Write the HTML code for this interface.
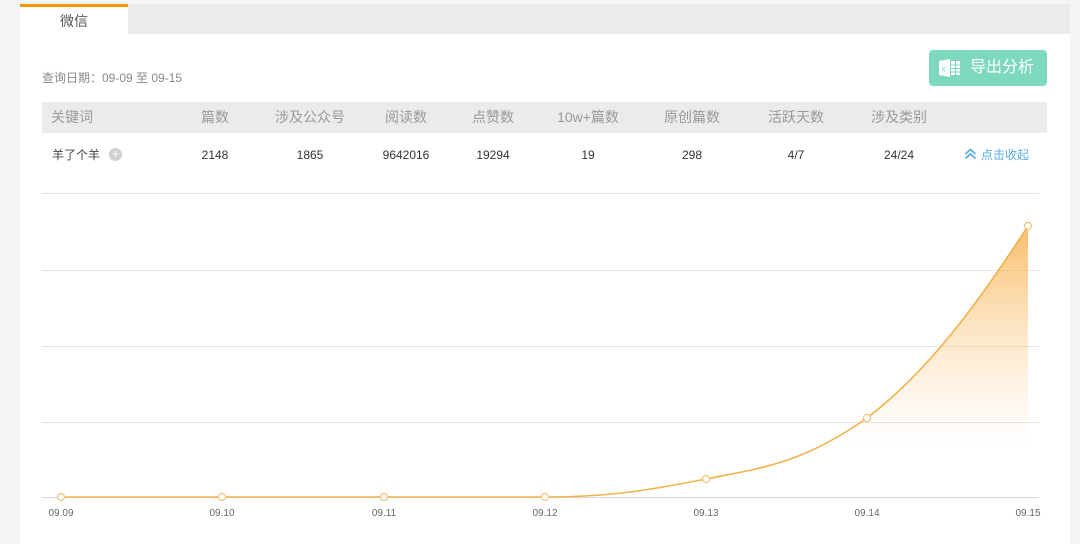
<!DOCTYPE html>
<html><head><meta charset="utf-8"><style>
*{margin:0;padding:0;box-sizing:border-box}
body{width:1080px;height:544px;background:#f4f4f4;font-family:"Liberation Sans","Noto Sans CJK SC",sans-serif;position:relative;overflow:hidden}
.card{position:absolute;left:20px;top:4px;width:1050px;height:540px;background:#fff}
.tabbar{position:absolute;left:0;top:0;width:1050px;height:30px;background:#ebebeb}
.tab{position:absolute;left:0;top:0;width:108px;height:30px;background:#fff;border-top:3px solid #f39800;text-align:center;font-size:14px;color:#555;line-height:28px}
.date{position:absolute;left:22px;top:65px;font-size:12px;color:#888}
.btn{position:absolute;left:909px;top:46px;width:118px;height:36px;background:#7dd8bd;border-radius:4px;color:#fff;font-size:16px;line-height:36px;padding-left:41px}
.xl{position:absolute;left:10px;top:9px;width:22px;height:18px}
.thead{position:absolute;left:22px;top:98px;width:1005px;height:31px;background:#ebebeb;font-size:14px;color:#999}
.thead span,.row span{position:absolute;top:0;transform:translateX(-50%);white-space:nowrap}
.thead span{line-height:31px}
.row{position:absolute;left:22px;top:140px;width:1005px;height:22px;font-size:12px;color:#333;line-height:22px}
.row span.l{transform:none}
</style></head><body>
<div class="card">
<div class="tabbar"><div class="tab">微信</div></div>
<div class="date">查询日期：09-09 至 09-15</div>
<div class="btn"><svg class="xl" viewBox="0 0 22 18"><path d="M0 2 L11 0 L11 18 L0 16Z" fill="#fff"/><rect x="12" y="2" width="9" height="14" fill="#fff"/><g stroke="#7dd8bd" stroke-width="1"><line x1="12" y1="6" x2="21" y2="6"/><line x1="12" y1="9.5" x2="21" y2="9.5"/><line x1="12" y1="13" x2="21" y2="13"/><line x1="16.5" y1="2" x2="16.5" y2="16"/></g><text x="2.5" y="12.5" font-size="8" fill="#7dd8bd" font-family="Liberation Sans">x</text></svg>导出分析</div>
<div class="thead">
<span style="left:30px">关键词</span><span style="left:173px">篇数</span><span style="left:268px">涉及公众号</span><span style="left:364px">阅读数</span><span style="left:451px">点赞数</span><span style="left:546px">10w+篇数</span><span style="left:650px">原创篇数</span><span style="left:754px">活跃天数</span><span style="left:857px">涉及类别</span>
</div>
<div class="row">
<span class="l" style="left:10px;color:#444">羊了个羊</span>
<span class="l" style="left:67px;top:4px;width:13px;height:13px;border-radius:50%;background:#d0d0d0;color:#fff;font-size:12px;line-height:13px;text-align:center">+</span>
<span style="left:173px">2148</span><span style="left:268px">1865</span><span style="left:364px">9642016</span><span style="left:451px">19294</span><span style="left:546px">19</span><span style="left:650px">298</span><span style="left:754px">4/7</span><span style="left:857px">24/24</span>
<span class="l" style="left:922px;color:#5aaee8"><svg width="13" height="12" viewBox="0 0 13 12" style="vertical-align:-1px;margin-right:4px"><path d="M1.5 6 L6.5 1.5 L11.5 6 M1.5 10.5 L6.5 6 L11.5 10.5" fill="none" stroke="#5aaee8" stroke-width="1.8"/></svg>点击收起</span>
</div>
</div>
<svg style="position:absolute;left:0;top:0" width="1080" height="544">
<defs><linearGradient id="g" x1="0" y1="226" x2="0" y2="445" gradientUnits="userSpaceOnUse"><stop offset="0" stop-color="#f7b350" stop-opacity=".85"/><stop offset="1" stop-color="#fbd7a6" stop-opacity="0"/></linearGradient></defs>
<g stroke="#e3e3e3" stroke-width="1"><line x1="42" y1="193.5" x2="1039" y2="193.5"/><line x1="42" y1="270.5" x2="1039" y2="270.5"/><line x1="42" y1="346.5" x2="1039" y2="346.5"/><line x1="42" y1="422.5" x2="1039" y2="422.5"/><line x1="42" y1="497.5" x2="1039" y2="497.5" stroke="#d5d8e0"/></g>
<path d="M61 497 L545 497 C610 497 650 490 706 479 C760 468 800 465 867 418 C930 370 980 300 1028 226 L1028 497 L61 497Z" fill="url(#g)"/>
<path d="M61 497 L545 497 C610 497 650 490 706 479 C760 468 800 465 867 418 C930 370 980 300 1028 226" fill="none" stroke="#f2b24c" stroke-width="1.6"/>
<g fill="#fff" stroke="#f2c27a" stroke-width="1.2"><circle cx="61" cy="497" r="3.5"/><circle cx="222" cy="497" r="3.5"/><circle cx="384" cy="497" r="3.5"/><circle cx="545" cy="497" r="3.5"/><circle cx="706" cy="479" r="3.5"/><circle cx="867" cy="418" r="3.5"/><circle cx="1028" cy="226" r="3.5"/></g>
<g font-size="10" fill="#666" text-anchor="middle" font-family="Liberation Sans"><text x="61" y="516">09.09</text><text x="222" y="516">09.10</text><text x="384" y="516">09.11</text><text x="545" y="516">09.12</text><text x="706" y="516">09.13</text><text x="867" y="516">09.14</text><text x="1028" y="516">09.15</text></g>
</svg>
</body></html>
